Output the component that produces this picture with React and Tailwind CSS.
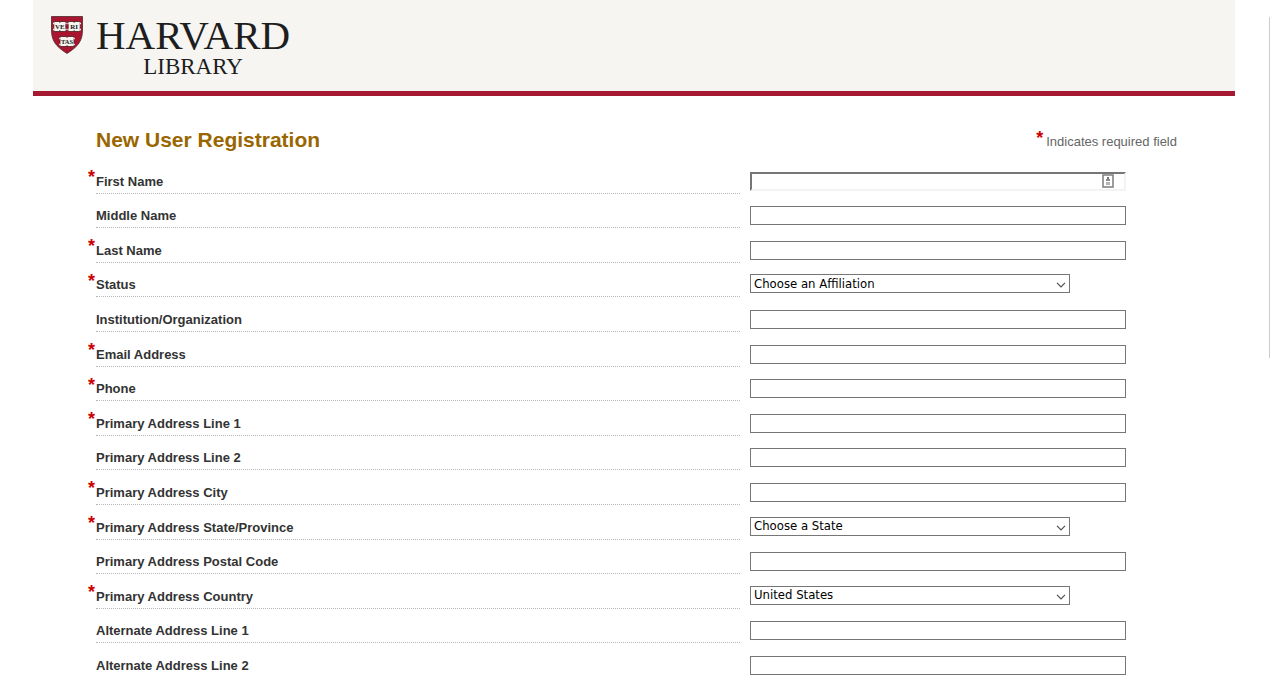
import { clsx } from 'clsx'

const fields = [
  { id: 'firstName', label: 'First Name', required: true, active: true },
  { id: 'middleName', label: 'Middle Name' },
  { id: 'lastName', label: 'Last Name', required: true },
  { id: 'status', label: 'Status', required: true, options: ['Choose an Affiliation'] },
  { id: 'institution', label: 'Institution/Organization' },
  { id: 'email', label: 'Email Address', required: true },
  { id: 'phone', label: 'Phone', required: true },
  { id: 'address1', label: 'Primary Address Line 1', required: true },
  { id: 'address2', label: 'Primary Address Line 2' },
  { id: 'city', label: 'Primary Address City', required: true },
  { id: 'state', label: 'Primary Address State/Province', required: true, options: ['Choose a State'] },
  { id: 'postalCode', label: 'Primary Address Postal Code' },
  { id: 'country', label: 'Primary Address Country', required: true, options: ['United States'] },
  { id: 'altAddress1', label: 'Alternate Address Line 1' },
  { id: 'altAddress2', label: 'Alternate Address Line 2' },
]

function Book({ x, y, w = 13, size, children }) {
  return (
    <g transform={`translate(${x} ${y})`}>
      <path d={`M0 0.5 H${w} V10.5 H0 Z`} fill="#f7f5f0" stroke="#4b1a20" strokeWidth="0.8" />
      <path
        d={`M-0.8 2.5 H0.5 M-0.8 8.5 H0.5 M${w - 0.5} 2.5 H${w + 0.8} M${w - 0.5} 8.5 H${w + 0.8}`}
        stroke="#f7f5f0"
        strokeWidth="1.4"
      />
      <path d={`M${w / 2} 0.5 V2 M${w / 2} 9 V10.5`} stroke="#4b1a20" strokeWidth="0.8" />
      <text x={w / 2} y="7.9" textAnchor="middle" fontSize={size} fontWeight="700" fill="#222">
        {children}
      </text>
    </g>
  )
}

function Shield() {
  return (
    <svg viewBox="0 0 32 38" className="h-[38px] w-8 shrink-0 font-['Liberation_Serif',serif]" aria-hidden="true">
      <path
        d="M0.5 0.5 H31.5 V14 C31.5 24 28 30 16 37.5 C4 30 0.5 24 0.5 14 Z"
        fill="#a9152f"
        stroke="#4a2a2e"
        strokeWidth="0.8"
      />
      <Book x="2.8" y="5" w={12} size="7">VE</Book>
      <Book x="17.2" y="5" w={12} size="7">RI</Book>
      <Book x="9" y="20" w={14} size="6.5">TAS</Book>
    </svg>
  )
}

function Header() {
  return (
    <header className="border-b-5 border-[#a51931] bg-[#f6f5f2] pt-4 pb-[11px] pl-[18px]">
      <a href="#" className="flex w-fit gap-[13px] font-['Liberation_Serif',serif] text-[#1e1e1e]">
        <Shield />
        <span className="flex flex-col items-center">
          <span className="text-[41px] leading-[38px]">HARVARD</span>
          <span className="text-[23px] leading-[26px]">LIBRARY</span>
        </span>
      </a>
    </header>
  )
}

function Star({ className }) {
  return <span className={clsx('text-[18px] leading-5 font-bold text-[#cc0000]', className)}>*</span>
}

function ContactIcon() {
  return (
    <svg viewBox="0 0 12 14" className="pointer-events-none absolute top-0.5 right-3 h-3.5 w-3" aria-hidden="true">
      <rect x="1" y="1" width="10" height="12" fill="#fff" stroke="#848484" strokeWidth="1.6" />
      <rect x="5" y="3" width="2" height="2" fill="#777" />
      <path d="M4 5h4v2H4z" fill="#8a8a8a" />
      <path d="M4 8h4v3H4z" fill="#b4b4b4" />
    </svg>
  )
}

function TextField({ id, active }) {
  return (
    <div className="relative mb-[3px] w-[376px]">
      <input
        id={id}
        name={id}
        type="text"
        className={clsx(
          'block h-[19px] w-full bg-white px-1 text-[13px] outline-none',
          active
            ? 'border-2 border-t-[#767676] border-r-[#f3f3f3] border-b-[#f3f3f3] border-l-[#767676] pr-7'
            : 'border border-[#767676]',
        )}
      />
      {active && <ContactIcon />}
    </div>
  )
}

function SelectField({ id, options }) {
  return (
    <div className="relative mb-1 w-80">
      <select
        id={id}
        name={id}
        className="block h-[19px] w-full appearance-none border border-[#767676] bg-white pl-[3px] font-['DejaVu_Sans_Condensed','DejaVu_Sans',sans-serif] text-[13px] leading-4 text-black"
      >
        {options.map(option => (
          <option key={option}>{option}</option>
        ))}
      </select>
      <svg viewBox="0 0 10 6" className="pointer-events-none absolute top-2 right-1 h-1.5 w-2.5" aria-hidden="true">
        <path d="M1 0.8 L5 4.8 L9 0.8" fill="none" stroke="#505050" strokeWidth="1.2" />
      </svg>
    </div>
  )
}

function FieldRow({ field }) {
  return (
    <div className="flex gap-2.5">
      <div className="flex flex-1">
        <span className="w-[9px] shrink-0 pt-2 pl-px">{field.required && <Star className="block" />}</span>
        <label
          htmlFor={field.id}
          className="flex flex-1 items-end border-b border-dotted border-[#b8b8b8] pb-[3px] text-[13px] leading-4 font-bold text-[#333]"
        >
          {field.label}
        </label>
      </div>
      <div className="flex w-[427px] items-end">
        {field.options ? <SelectField {...field} /> : <TextField {...field} />}
      </div>
    </div>
  )
}

export default function App() {
  return (
    <div className="bg-white pr-[35px] pl-[33px] font-['Liberation_Sans',sans-serif]">
      <Header />
      <main className="pt-8 pr-[58px] pl-[54px]">
        <div className="flex items-start justify-between pl-[9px]">
          <h1 className="text-[21px] leading-6 font-bold text-[#996600]">New User Registration</h1>
          <p className="flex gap-[3px] text-[13px] leading-7 text-[#666]">
            <Star />
            Indicates required field
          </p>
        </div>
        <form className="mt-[3px] grid min-h-[519px] auto-rows-fr">
          {fields.map(field => (
            <FieldRow key={field.id} field={field} />
          ))}
        </form>
      </main>
      <div className="absolute top-[17px] right-0 h-[341px] w-px bg-[#cdcdcd]" />
    </div>
  )
}
